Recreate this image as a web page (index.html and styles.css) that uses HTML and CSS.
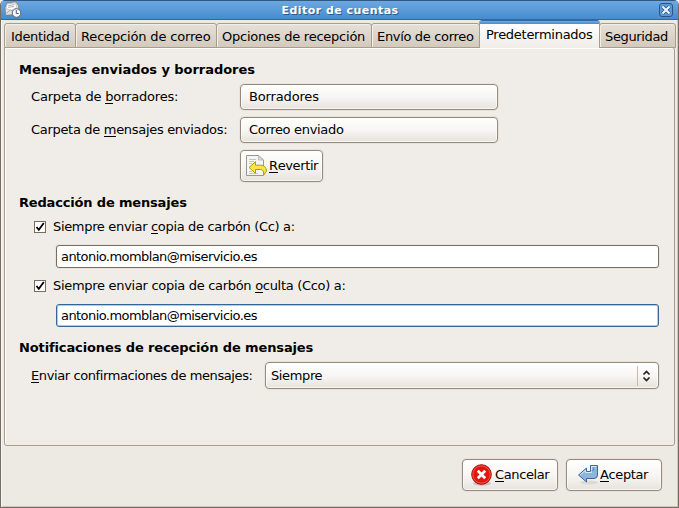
FILE: index.html
```html
<!DOCTYPE html>
<html lang="es">
<head>
<meta charset="utf-8">
<title>Editor de cuentas</title>
<link rel="stylesheet" href="styles.css">
</head>
<body>
<div class="window">
  <header class="titlebar">
    <svg class="app-icon" width="18" height="17" viewBox="0 0 18 17">
      <path d="M1 6.500 3 2 12 .8l2.500 3.700L15 10l-2 3.500-11.500.800z" fill="#e4e3df" stroke="#77797b" stroke-width=".8"/>
      <path d="M3 3 11.500 1.800l1.500 5-6 2.700-5-2z" fill="#fff" stroke="#aaa" stroke-width=".6"/>
      <path d="M4.500 4.500l6-.8M4 6.300l6-.8M1.500 13l5-4 5 3" fill="none" stroke="#999" stroke-width=".8"/>
      <circle cx="12.500" cy="12" r="4.300" fill="#f4f6f8" stroke="#5b6773"/>
      <path d="M12.300 9v3.500h2.400" fill="none" stroke="#49647f"/>
    </svg>
    <h1 class="title">Editor de cuentas</h1>
    <svg class="close" width="14" height="14" viewBox="0 0 14 14">
      <rect x=".5" y=".5" width="13" height="13" rx="2.500" fill="#5b9ada" stroke="#2c5482"/>
      <path d="M3.500 3.500l7 7M10.500 3.500l-7 7" stroke="#2c5482" stroke-width="3.800"/>
      <path d="M3.500 3.500l7 7M10.500 3.500l-7 7" stroke="#e8f3ff" stroke-width="2.200"/>
    </svg>
  </header>
  <nav class="tabs">
    <span class="tab t1">Identidad</span>
    <span class="tab t2">Recepción de correo</span>
    <span class="tab t3">Opciones de recepción</span>
    <span class="tab t4">Envío de correo</span>
    <span class="tab t5 active">Predeterminados</span>
    <span class="tab t6">Seguridad</span>
  </nav>
  <main class="panel">
    <h2 class="sent">Mensajes enviados y borradores</h2>
    <div class="row"><span class="label drafts">Carpeta de <u>b</u>orradores:</span><button class="btn folder">Borradores</button></div>
    <div class="row second"><span class="label">Carpeta de <u>m</u>ensajes enviados:</span><button class="btn folder outbox">Correo enviado</button></div>
    <button class="btn revert">
      <svg width="22" height="22" viewBox="0 0 22 22">
        <path d="M.5.500h12l5 4.500v15.500H.5z" fill="#f5f5f3" stroke="#969894"/>
        <path d="M12.500.500V5h5z" fill="#ddd" stroke="#aaa" stroke-width=".7"/>
        <path d="M3 4.500h7M3 6.500h5M3 8.500h3M3 16.500h3M3 18.500h9" stroke="#c4c6c2"/>
        <path d="M3 12.500 9.500 6.700v3.500h5q5.500 0 6 5.800l-2.800 4q.3-5.500-3-5.500H9.500v3.800z" fill="#f7e647" stroke="#b89a00" stroke-linejoin="round"/>
      </svg><span><u>R</u>evertir</span>
    </button>
    <h2 class="compose">Redacción de mensajes</h2>
    <div class="check c1"><svg width="12" height="12" viewBox="0 0 12 12"><rect x=".5" y=".5" width="11" height="11" fill="#fff" stroke="#776c5d"/><path d="M2.500 6l2.300 2.800L9.800 2" fill="none" stroke="#000" stroke-width="1.800"/></svg><span>Siempre enviar <u>c</u>opia de carbón (Cc) a:</span></div>
    <div class="entry">antonio.momblan@miservicio.es</div>
    <div class="check c2"><svg width="12" height="12" viewBox="0 0 12 12"><rect x=".5" y=".5" width="11" height="11" fill="#fff" stroke="#776c5d"/><path d="M2.500 6l2.300 2.800L9.800 2" fill="none" stroke="#000" stroke-width="1.800"/></svg><span>Siempre enviar copia de carbón <u>o</u>culta (Cco) a:</span></div>
    <div class="entry focus">antonio.momblan@miservicio.es</div>
    <h2 class="notify">Notificaciones de recepción de mensajes</h2>
    <div class="row confirm"><span class="label wide"><u>E</u>nviar confirmaciones de mensajes:</span>
      <button class="btn combo"><span>Siempre</span><svg width="9" height="12" viewBox="0 0 9 12"><path d="M1.500 4.500l3-3 3 3M1.500 7.500l3 3 3-3" fill="none" stroke="#222" stroke-width="1.700"/></svg></button></div>
  </main>
  <footer class="actions">
    <button class="btn action cancel">
      <svg width="22" height="22" viewBox="0 0 22 22"><ellipse cx="11" cy="19.500" rx="9" ry="2.200" fill="#c5c1bc"/><circle cx="10.500" cy="10.500" r="9.800" fill="#e3170d" stroke="#a80808"/><circle cx="10.500" cy="10.500" r="8.700" fill="none" stroke="#f26a5c" stroke-width=".8"/><path d="M6.800 6.800l7.400 7.400M14.200 6.800l-7.400 7.400" stroke="#fff" stroke-width="2.800"/></svg><span><u>C</u>ancelar</span>
    </button>
    <button class="btn action accept">
      <svg width="22" height="22" viewBox="0 0 22 22"><ellipse cx="11" cy="18.500" rx="9" ry="2" fill="#dddad5"/><path d="M.500 11 8.500 4v3.500h4V1.500h7V11q0 3.500-3.500 3.500H8.500V18z" fill="#8fb5de" stroke="#3f6798" stroke-linejoin="round"/><path d="M2.200 11 7.500 6.300V8.500h6v-6h5" fill="none" stroke="#d8e8f8"/><path d="M13.500 6.500h2v-3" fill="none" stroke="#5f8cc0"/></svg><span><u>A</u>ceptar</span>
    </button>
  </footer>
</div>
</body>
</html>
```
FILE: styles.css
```css
* { box-sizing: border-box; }
body { margin: 0; background: #fff; font: 13px/16px "DejaVu Sans", sans-serif; font-feature-settings: "liga" 1; color: #000; overflow: hidden; }
u { text-decoration: none; box-shadow: 0 -1px 0 #000 inset; display: inline-block; height: 15px; }
.window { width: 679px; height: 508px; display: flex; flex-direction: column; background: #ede9e3; border: 1px solid #746c63; border-top: 0; border-radius: 5px 5px 0 0; overflow: hidden; box-shadow: inset 1px 0 #faf8f5, inset -1px -1px #cfc7bc; }
.titlebar { height: 20px; flex: none; display: flex; align-items: center; padding: 0 5px 0 3px; background: linear-gradient(#6ba8e4, #478ccf); border-top: 1px solid #34577e; border-bottom: 1px solid #33669c; }
.app-icon { margin-top: -1px; }
.title { flex: 1; margin: 0; padding: 2px 1px 0 0; text-align: center; font-size: 11px; line-height: 18px; color: #fff; text-shadow: 1px 1px 0 #285a8c; letter-spacing: .46px; }
.tabs { height: 28px; flex: none; display: flex; align-items: flex-end; padding: 0 3px; margin-bottom: -1px; position: relative; z-index: 1; }
.tab { height: 25px; margin-right: -1px; padding: 2px 0 0 5px; border: 1px solid #a99c8b; border-radius: 3px 3px 0 0; background: linear-gradient(#e6e0d8, #d3cabd); box-shadow: inset 1px 1px 0 #f2eee8; display: flex; align-items: center; white-space: nowrap; flex: none; }
.t1 { width: 72px; letter-spacing: -.35px; }
.t2 { width: 142px; letter-spacing: -.16px; }
.t3 { width: 156px; letter-spacing: -.24px; }
.t4 { width: 109px; letter-spacing: -.33px; }
.t5 { width: 121px; letter-spacing: -.27px; }
.t6 { width: 77px; letter-spacing: -.35px; }
.tab.t1 { padding-left: 6px; }
.tab.active { height: 28px; padding: 2px 0 0 6px; border-top: 0; border-bottom: 0; background: linear-gradient(#346aa3 0, #346aa3 1px, #6faae4 1px, #4b8bc9 4px, #fff 4px, #f0ede8 100%); box-shadow: none; }
.panel { margin: 0 3px; height: 399px; flex: none; border: 1px solid #a99c8b; border-radius: 0 3px 3px 3px; box-shadow: inset 1px 1px 0 #fff; background: #f0ede8; padding: 14px 15px 0 14px; }
h2 { margin: 0; font-size: 13px; line-height: 16px; }
.sent { letter-spacing: -.05px; }
.row { display: flex; align-items: center; margin: 6px 0 0 12px; }
.row.second { margin-top: 7px; }
.label { width: 209px; flex: none; white-space: nowrap; letter-spacing: -.31px; }
.label.drafts { letter-spacing: -.18px; }
.label.wide { width: 234px; letter-spacing: -.4px; }
.btn { font: inherit; font-feature-settings: inherit; color: #000; display: flex; align-items: center; padding: 0; border: 1px solid #96897a; border-radius: 4px; background: linear-gradient(#fff, #f7f6f4 50%, #e7e3dd); box-shadow: inset 0 0 0 1px rgba(255,255,255,.7), 0 0 0 1px #e7e2da; letter-spacing: -.38px; }
.folder { width: 258px; height: 26px; padding-left: 8px; letter-spacing: -.15px; }
.outbox { letter-spacing: -.32px; }
.revert { width: 83px; height: 32px; margin: 7px 0 0 221px; padding-left: 5px; gap: 1px; }
.compose { margin-top: 13px; letter-spacing: -.17px; }
.check { display: flex; align-items: center; gap: 7px; margin-left: 15px; height: 16px; letter-spacing: -.3px; }
.c1 { margin-top: 8px; letter-spacing: -.33px; }
.c2 { margin-top: 10px; }
.entry { height: 23px; margin: 10px 0 0 37px; padding-left: 4px; border: 1px solid #776c5d; border-radius: 3px; background: #fff; line-height: 21px; box-shadow: 0 0 0 1px #e9e4dd; letter-spacing: -.57px; }
.focus { border-color: #376595; box-shadow: inset 0 0 0 1px #a9cdef; }
.notify { margin-top: 13px; letter-spacing: -.12px; }
.confirm { margin-top: 6px; }
.combo { flex: 1; height: 27px; padding: 0 7px 0 5px; justify-content: space-between; }
.combo svg { box-sizing: content-box; border-left: 1px solid #c8bba8; padding: 4px 0 4px 4px; }
.actions { display: flex; justify-content: flex-end; gap: 8px; padding: 13px 16px 0 0; }
.action { width: 96px; height: 32px; }
.cancel { padding-left: 8px; }
.cancel span { margin-left: 2px; }
.accept { padding-left: 11px; }
```
